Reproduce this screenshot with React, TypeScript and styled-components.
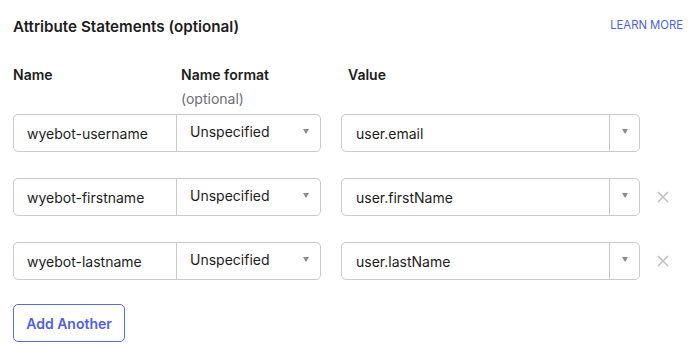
import { FC } from "react";
import styled, { createGlobalStyle } from "styled-components";

const GlobalStyle = createGlobalStyle`
  body {
    margin: 0;
    background: #fff;
    font-family: Inter, "Noto Sans", sans-serif;
    color: #1d1d21;
  }
`;

const Wrapper = styled.div`
  width: 697px;
  height: 346px;
  padding: 16px 13px 0 13px;
  box-sizing: border-box;
`;
const TitleRow = styled.div`
  display: flex;
  justify-content: space-between;
  align-items: flex-start;
  height: 24px;
`;
const Title = styled.h2`
  margin: 0;
  font-size: 15.2px;
  line-height: 22px;
  font-weight: 600;
`;
const LearnMore = styled.a`
  font-size: 11.3px;
  line-height: 16px;
  margin-top: 1px;
  margin-right: 1px;
  color: #4f5fe3;
  text-decoration: none;
`;
const HeaderRow = styled.div`
  display: flex;
  margin-top: 25px;
  height: 49px;
`;
const HeaderCell = styled.div<{ $width?: number }>`
  width: ${(p) => (p.$width ? `${p.$width}px` : "auto")};
  font-size: 14px;
  line-height: 20px;
  font-weight: 600;
`;
const HeaderHint = styled.div`
  margin-top: 4px;
  font-weight: 400;
  color: #6e6e78;
`;
const Rows = styled.div`
  display: flex;
  flex-direction: column;
  gap: 26px;
`;
const Row = styled.div`
  display: flex;
  align-items: center;
  height: 38px;
`;
const Box = styled.div`
  display: flex;
  align-items: center;
  height: 38px;
  box-sizing: border-box;
  border: 1px solid #c9c9ce;
  font-size: 14px;
  padding-left: 13px;
`;
const NameInput = styled(Box)`
  width: 164px;
  border-radius: 5px 0 0 5px;
`;
const FormatSelect = styled(Box)`
  width: 145px;
  margin-left: -1px;
  border-radius: 0 5px 5px 0;
  justify-content: space-between;
  padding-bottom: 3px;
  padding-right: 11px;
`;
const ValueBox = styled(Box)`
  width: 299px;
  margin-left: 20px;
  border-radius: 5px;
  padding: 0;
`;
const ValueText = styled.div`
  flex: 1;
  padding-left: 14px;
`;
const ValueToggle = styled.div`
  width: 30px;
  height: 100%;
  border-left: 1px solid #c9c9ce;
  display: flex;
  align-items: center;
  justify-content: center;
  padding-bottom: 3px;
  box-sizing: border-box;
`;
const Caret = styled.span`
  width: 0;
  height: 0;
  border-left: 3.5px solid transparent;
  border-right: 3.5px solid transparent;
  border-top: 5px solid #8b8b91;
`;
const Remove = styled.button`
  margin-left: 17px;
  width: 12px;
  height: 12px;
  padding: 0;
  border: 0;
  background: none;
  display: flex;
`;
const AddButton = styled.button`
  margin-top: 24px;
  height: 38px;
  width: 112px;
  border: 1px solid #5b6be6;
  border-radius: 5px;
  background: #fff;
  color: #4f5fe3;
  font-family: inherit;
  font-size: 14px;
  font-weight: 600;
`;

interface Statement {
  name: string;
  value: string;
  removable: boolean;
}

const statements: Statement[] = [
  { name: "wyebot-username", value: "user.email", removable: false },
  { name: "wyebot-firstname", value: "user.firstName", removable: true },
  { name: "wyebot-lastname", value: "user.lastName", removable: true },
];

const StatementRow: FC<{ statement: Statement }> = ({ statement }) => (
  <Row>
    <NameInput>{statement.name}</NameInput>
    <FormatSelect>
      <span>Unspecified</span>
      <Caret />
    </FormatSelect>
    <ValueBox>
      <ValueText>{statement.value}</ValueText>
      <ValueToggle>
        <Caret />
      </ValueToggle>
    </ValueBox>
    {statement.removable && (
      <Remove aria-label="Remove">
        <svg width="12" height="12" viewBox="0 0 12 12">
          <path d="M1 1L11 11M11 1L1 11" stroke="#c2c2c6" strokeWidth="1.6" />
        </svg>
      </Remove>
    )}
  </Row>
);

export default function App() {
  return (
    <>
      <GlobalStyle />
      <Wrapper>
        <TitleRow>
          <Title>Attribute Statements (optional)</Title>
          <LearnMore href="#">LEARN MORE</LearnMore>
        </TitleRow>
        <HeaderRow>
          <HeaderCell $width={168}>Name</HeaderCell>
          <HeaderCell $width={167}>
            Name format
            <HeaderHint>(optional)</HeaderHint>
          </HeaderCell>
          <HeaderCell>Value</HeaderCell>
        </HeaderRow>
        <Rows>
          {statements.map((s) => (
            <StatementRow key={s.name} statement={s} />
          ))}
        </Rows>
        <AddButton>Add Another</AddButton>
      </Wrapper>
    </>
  );
}
